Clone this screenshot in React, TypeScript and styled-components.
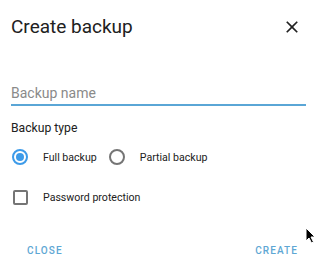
import React from "react";
import styled, { createGlobalStyle } from "styled-components";

const GlobalStyle = createGlobalStyle`
  html, body {
    margin: 0;
    padding: 0;
    background: #ffffff;
  }
  body {
    font-family: Roboto, "Noto Sans", Arial, sans-serif;
    -webkit-font-smoothing: antialiased;
  }
`;

const Dialog = styled.div`
  position: relative;
  width: 318px;
  height: 270px;
  background: #ffffff;
  display: flex;
  flex-direction: column;
  box-sizing: border-box;
  overflow: hidden;
`;

const Header = styled.header`
  display: flex;
  align-items: center;
  justify-content: space-between;
  padding: 15px 14px 0 11px;
`;

const Title = styled.h2`
  margin: 0;
  font-size: 19px;
  line-height: 24px;
  font-weight: 400;
  color: #212121;
`;

const IconButton = styled.button`
  display: flex;
  align-items: center;
  justify-content: center;
  width: 24px;
  height: 24px;
  padding: 0;
  border: none;
  background: none;
  color: #212121;
  cursor: pointer;
`;

const Content = styled.div`
  display: flex;
  flex-direction: column;
  padding: 0 12px 0 11px;
`;

const TextField = styled.div`
  margin-top: 44px;
  border-bottom: 2px solid #5aa6d6;
  padding-bottom: 1px;
`;

const Placeholder = styled.span`
  display: block;
  font-size: 14px;
  line-height: 20px;
  color: #8a8a8a;
`;

const SectionLabel = styled.div`
  margin-top: 13px;
  font-size: 12.2px;
  line-height: 18px;
  color: #212121;
`;

const OptionRow = styled.div`
  display: flex;
  align-items: center;
  margin: 0 -12px 0 -11px;
  height: 40px;
`;

const Control = styled.div`
  width: 40px;
  height: 40px;
  display: flex;
  align-items: center;
  justify-content: center;
`;

const RadioRing = styled.span<{ checked?: boolean }>`
  box-sizing: border-box;
  width: 16px;
  height: 16px;
  border-radius: 50%;
  border: 2px solid ${({ checked }) => (checked ? "#3d9be9" : "#757575")};
  display: flex;
  align-items: center;
  justify-content: center;

  &::after {
    content: "";
    width: 8px;
    height: 8px;
    border-radius: 50%;
    background: ${({ checked }) => (checked ? "#3d9be9" : "transparent")};
  }
`;

const CheckBox = styled.span`
  box-sizing: border-box;
  width: 15px;
  height: 15px;
  border: 2px solid #757575;
  border-radius: 2px;
`;

const OptionLabel = styled.span`
  padding-left: 3px;
  font-size: 10.6px;
  color: #212121;
`;

const Actions = styled.footer`
  display: flex;
  justify-content: space-between;
  align-items: center;
  margin-top: auto;
  padding: 0 12px 6px 19px;
`;

const TextButton = styled.button`
  border: none;
  background: none;
  padding: 8px;
  font-family: Roboto, Arial, sans-serif;
  font-size: 10px;
  font-weight: 500;
  letter-spacing: 1.1px;
  text-transform: uppercase;
  color: #5ea7d4;
  cursor: pointer;
`;

const Pointer = styled.svg`
  position: absolute;
  left: 305px;
  top: 227px;
`;

export default function App() {
  return (
    <>
      <GlobalStyle />
      <Dialog>
        <Header>
          <Title>Create backup</Title>
          <IconButton aria-label="Close">
            <svg width="20" height="20" viewBox="0 0 24 24">
              <path
                fill="currentColor"
                d="M19 6.41 17.59 5 12 10.59 6.41 5 5 6.41 10.59 12 5 17.59 6.41 19 12 13.41 17.59 19 19 17.59 13.41 12z"
              />
            </svg>
          </IconButton>
        </Header>
        <Content>
          <TextField>
            <Placeholder>Backup name</Placeholder>
          </TextField>
          <SectionLabel>Backup type</SectionLabel>
          <OptionRow>
            <Control>
              <RadioRing checked />
            </Control>
            <OptionLabel>Full backup</OptionLabel>
            <Control>
              <RadioRing />
            </Control>
            <OptionLabel>Partial backup</OptionLabel>
          </OptionRow>
          <OptionRow>
            <Control>
              <CheckBox />
            </Control>
            <OptionLabel>Password protection</OptionLabel>
          </OptionRow>
        </Content>
        <Actions>
          <TextButton>Close</TextButton>
          <TextButton>Create</TextButton>
        </Actions>
        <Pointer width="11" height="17" viewBox="0 0 11 17">
          <path d="M1 1 L1 14 L4 11 L6.5 16 L8.5 15 L6 10 L10 10 Z" fill="#000" stroke="#fff" strokeWidth="1" />
        </Pointer>
      </Dialog>
    </>
  );
}
